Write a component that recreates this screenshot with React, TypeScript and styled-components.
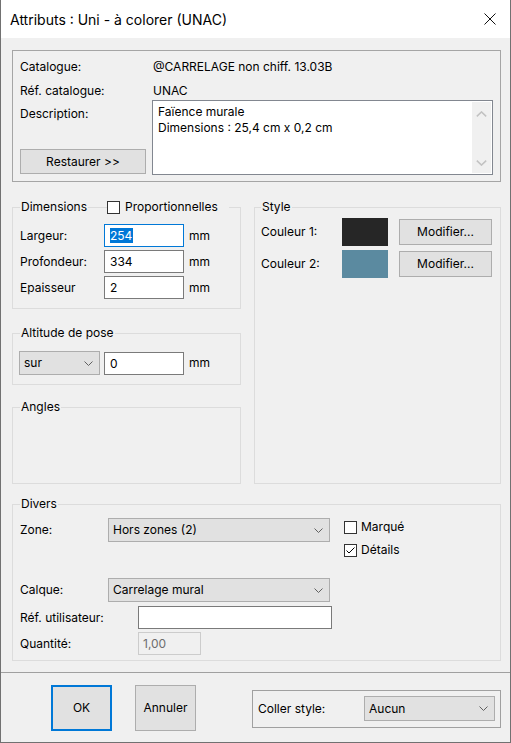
import React from "react";
import styled, { createGlobalStyle } from "styled-components";

const FONT = `Inter, "Noto Sans", "DejaVu Sans", sans-serif`;

const GlobalStyle = createGlobalStyle`
  html, body { margin: 0; padding: 0; background: #ffffff; }
  body { font-family: ${FONT}; font-size: 12px; color: #000; }
  * { box-sizing: border-box; }
`;

const Window = styled.div`
  width: 511px;
  height: 743px;
  border: 1px solid #717171;
  border-top: none;
  background: #f0f0f0;
  display: flex;
  flex-direction: column;
`;

const TitleBar = styled.div`
  height: 38px;
  flex: none;
  background: #ffffff;
  display: flex;
  align-items: center;
  justify-content: space-between;
  padding: 0 14px 0 9px;
  font-size: 14px;
  color: #000;
`;

const Body = styled.div`
  flex: 1;
  display: flex;
  flex-direction: column;
  padding: 12px 9px 0 11px;
`;

const InfoGroup = styled.div`
  border: 1px solid #a5a5a5;
  padding: 8px 7px 6px 7px;
  display: grid;
  grid-template-columns: 132px 341px;
  grid-template-rows: 24px 17px 75px;
  line-height: 16px;
`;

const Label = styled.div`
  line-height: 16px;
  white-space: nowrap;
`;

const Value = styled.div`
  line-height: 16px;
  padding-left: 1px;
  white-space: nowrap;
`;

const DescCell = styled.div`
  display: flex;
  flex-direction: column;
  justify-content: space-between;
  padding: 6px 0 1px 0;
`;

const PushButton = styled.div<{ $w: number; $h: number; $default?: boolean }>`
  width: ${(p) => p.$w}px;
  height: ${(p) => p.$h}px;
  flex: none;
  background: #e1e1e1;
  border: ${(p) => (p.$default ? "2px solid #0078d7" : "1px solid #adadad")};
  display: flex;
  align-items: center;
  justify-content: center;
  line-height: 16px;
  white-space: nowrap;
`;

const TextArea = styled.div`
  background: #fff;
  border: 1px solid #828790;
  display: flex;
`;

const TextAreaText = styled.div`
  flex: 1;
  padding: 3px 0 0 5px;
  line-height: 16px;
`;

const ScrollBar = styled.div`
  width: 19px;
  margin: 1px;
  background: #f0f0f0;
  display: flex;
  flex-direction: column;
  justify-content: space-between;
  align-items: center;
  padding: 9px 0 7px;
`;

const Middle = styled.div`
  margin-top: 17px;
  display: grid;
  grid-template-columns: 229px 247px;
  column-gap: 13px;
`;

const LeftStack = styled.div`
  display: flex;
  flex-direction: column;
`;

const Group = styled.fieldset<{ $pad: string; $mt?: number; $h?: number }>`
  margin: ${(p) => p.$mt ?? 0}px 0 0 0;
  min-width: 0;
  border: 1px solid #dcdcdc;
  padding: ${(p) => p.$pad};
  ${(p) => (p.$h ? `height: ${p.$h}px;` : "")}
`;

const Legend = styled.legend<{ $ml?: number }>`
  padding: 0 1px;
  margin-left: ${(p) => p.$ml ?? 0}px;
  line-height: 16px;
  font-size: 12px;
`;

const LegendFlex = styled.legend`
  padding: 0 11px 0 1px;
  line-height: 16px;
  font-size: 12px;
  display: flex;
  align-items: center;
`;

const LegendRule = styled.span`
  width: 19px;
  height: 1px;
  background: #dcdcdc;
  margin: 1px 0 0 1px;
`;

const LegendCheckText = styled.span`
  margin-left: 5px;
`;

const DimGrid = styled.div`
  display: grid;
  grid-template-columns: 84px 80px auto;
  grid-auto-rows: 23px;
  row-gap: 3px;
  align-items: center;
`;

const Unit = styled.span`
  padding-left: 5px;
  line-height: 16px;
  align-self: center;
`;

const TextBox = styled.div<{ $w: number; $h?: number; $disabled?: boolean; $focus?: boolean; $ml?: number; $mt?: number }>`
  width: ${(p) => p.$w}px;
  height: ${(p) => p.$h ?? 23}px;
  flex: none;
  margin-left: ${(p) => p.$ml ?? 0}px;
  margin-top: ${(p) => p.$mt ?? 0}px;
  background: ${(p) => (p.$disabled ? "#f0f0f0" : "#ffffff")};
  border: 1px solid ${(p) => (p.$disabled ? "#cccccc" : p.$focus ? "#0078d7" : "#7a7a7a")};
  color: ${(p) => (p.$disabled ? "#6d6d6d" : "#000")};
  display: flex;
  align-items: center;
  padding-left: ${(p) => (p.$disabled ? 4 : 5)}px;
  line-height: 16px;
`;

const Selected = styled.span`
  background: #0078d7;
  color: #fff;
  line-height: 15px;
  padding-right: 1px;
`;

const StyleGrid = styled.div`
  display: grid;
  grid-template-columns: 70px 46px 93px;
  column-gap: 11px;
  grid-auto-rows: 28px;
  row-gap: 4px;
  align-items: center;
`;

const Swatch = styled.div<{ $c: string }>`
  width: 46px;
  height: 28px;
  background: ${(p) => p.$c};
`;

const InlineRow = styled.div`
  display: flex;
  align-items: flex-start;
`;

const Select = styled.div<{ $w: number; $h?: number }>`
  width: ${(p) => p.$w}px;
  height: ${(p) => p.$h ?? 24}px;
  flex: none;
  background: #e1e1e1;
  border: 1px solid #adadad;
  display: flex;
  align-items: center;
  justify-content: space-between;
  padding: 0 6px 0 4px;
  line-height: 16px;
  white-space: nowrap;
`;

const DiversBody = styled.div`
  display: grid;
  grid-template-columns: 312px auto;
  column-gap: 12px;
`;

const DiversLeft = styled.div`
  display: flex;
  flex-direction: column;
`;

const FormRow = styled.div<{ $lw: number; $mt?: number }>`
  display: grid;
  grid-template-columns: ${(p) => p.$lw}px auto;
  align-items: center;
  margin-top: ${(p) => p.$mt ?? 0}px;
`;

const CheckColumn = styled.div`
  display: flex;
  flex-direction: column;
  row-gap: 7px;
  padding-top: 1px;
`;

const CheckRow = styled.label`
  display: flex;
  align-items: center;
  column-gap: 4px;
  line-height: 16px;
  white-space: nowrap;
`;

const Box = styled.span`
  width: 13px;
  height: 13px;
  flex: none;
  background: #fff;
  border: 1px solid #333;
  display: flex;
  align-items: center;
  justify-content: center;
`;

const Footer = styled.div`
  height: 70px;
  flex: none;
  border-top: 1px solid #a0a0a0;
  display: flex;
  align-items: center;
  padding-left: 50px;
`;

const CancelButton = styled(PushButton)`
  margin-left: 23px;
`;

const ColleBox = styled.div`
  margin-left: 56px;
  width: 249px;
  height: 38px;
  border: 1px solid #a0a0a0;
  display: flex;
  align-items: center;
  justify-content: space-between;
  padding: 0 5px;
  margin-top: 2px;
`;

const Chevron = ({ up, color = "#606060" }: { up?: boolean; color?: string }) => (
  <svg width="9" height="5" viewBox="0 0 9 5">
    <path
      d={up ? "M0.5 4.5 L4.5 0.5 L8.5 4.5" : "M0.5 0.5 L4.5 4.5 L8.5 0.5"}
      fill="none"
      stroke={color}
      strokeWidth="1"
    />
  </svg>
);

const ScrollArrow = ({ up }: { up?: boolean }) => (
  <svg width="11" height="6" viewBox="0 0 11 6">
    <path
      d={up ? "M0.8 5.4 L5.5 0.9 L10.2 5.4" : "M0.8 0.6 L5.5 5.1 L10.2 0.6"}
      fill="none"
      stroke="#c2c2c2"
      strokeWidth="1.5"
    />
  </svg>
);

const CloseIcon = () => (
  <svg width="12" height="12" viewBox="0 0 12 12">
    <path d="M0.5 0.5 L11.5 11.5 M11.5 0.5 L0.5 11.5" stroke="#111" strokeWidth="1" fill="none" />
  </svg>
);

const CheckBox = ({ checked }: { checked?: boolean }) => (
  <Box>
    {checked && (
      <svg width="11" height="11" viewBox="0 0 11 11">
        <path d="M1.5 5.5 L4 8 L9.5 2.5" fill="none" stroke="#000" strokeWidth="1" />
      </svg>
    )}
  </Box>
);

export default function App() {
  return (
    <>
      <GlobalStyle />
      <Window>
        <TitleBar>
          <span>Attributs : Uni - à colorer (UNAC)</span>
          <CloseIcon />
        </TitleBar>
        <Body>
          <InfoGroup>
            <Label>Catalogue:</Label>
            <Value>@CARRELAGE non chiff. 13.03B</Value>
            <Label>Réf. catalogue:</Label>
            <Value>UNAC</Value>
            <DescCell>
              <Label>Description:</Label>
              <PushButton $w={126} $h={25}>Restaurer &gt;&gt;</PushButton>
            </DescCell>
            <TextArea>
              <TextAreaText>
                Faïence murale
                <br />
                Dimensions : 25,4 cm x 0,2 cm
              </TextAreaText>
              <ScrollBar>
                <ScrollArrow up />
                <ScrollArrow />
              </ScrollBar>
            </TextArea>
          </InfoGroup>

          <Middle>
            <LeftStack>
              <Group $pad="9px 7px 9px 7px">
                <LegendFlex>
                  Dimensions
                  <LegendRule />
                  <CheckBox />
                  <LegendCheckText>Proportionnelles</LegendCheckText>
                </LegendFlex>
                <DimGrid>
                  <Label>Largeur:</Label>
                  <TextBox $w={80} $focus>
                    <Selected>254</Selected>
                  </TextBox>
                  <Unit>mm</Unit>
                  <Label>Profondeur:</Label>
                  <TextBox $w={80}>334</TextBox>
                  <Unit>mm</Unit>
                  <Label>Epaisseur</Label>
                  <TextBox $w={80}>2</TextBox>
                  <Unit>mm</Unit>
                </DimGrid>
              </Group>

              <Group $pad="10px 7px 9px 6px" $mt={16}>
                <Legend $ml={1}>Altitude de pose</Legend>
                <InlineRow>
                  <Select $w={81}>
                    <span>sur</span>
                    <Chevron />
                  </Select>
                  <TextBox $w={80} $ml={4} $mt={1}>
                    0
                  </TextBox>
                  <Unit>mm</Unit>
                </InlineRow>
              </Group>

              <Group $pad="0 7px" $mt={14} $h={85}>
                <Legend>Angles</Legend>
              </Group>
            </LeftStack>

            <Group $pad="3px 7px 0 6px">
              <Legend>Style</Legend>
              <StyleGrid>
                <Label>Couleur 1:</Label>
                <Swatch $c="#262626" />
                <PushButton $w={93} $h={26}>Modifier...</PushButton>
                <Label>Couleur 2:</Label>
                <Swatch $c="#5b8aa0" />
                <PushButton $w={93} $h={26}>Modifier...</PushButton>
              </StyleGrid>
            </Group>
          </Middle>

          <Group $pad="6px 7px 5px 7px" $mt={12}>
            <Legend>Divers</Legend>
            <DiversBody>
              <DiversLeft>
                <FormRow $lw={88}>
                  <Label>Zone:</Label>
                  <Select $w={222}>
                    <span>Hors zones (2)</span>
                    <Chevron />
                  </Select>
                </FormRow>
                <FormRow $lw={88} $mt={36}>
                  <Label>Calque:</Label>
                  <Select $w={222}>
                    <span>Carrelage mural</span>
                    <Chevron />
                  </Select>
                </FormRow>
                <FormRow $lw={118} $mt={4}>
                  <Label>Réf. utilisateur:</Label>
                  <TextBox $w={194} />
                </FormRow>
                <FormRow $lw={118} $mt={3}>
                  <Label>Quantité:</Label>
                  <TextBox $w={63} $disabled>
                    1,00
                  </TextBox>
                </FormRow>
              </DiversLeft>
              <CheckColumn>
                <CheckRow>
                  <CheckBox />
                  Marqué
                </CheckRow>
                <CheckRow>
                  <CheckBox checked />
                  Détails
                </CheckRow>
              </CheckColumn>
            </DiversBody>
          </Group>
        </Body>

        <Footer>
          <PushButton $w={61} $h={46} $default>
            OK
          </PushButton>
          <CancelButton $w={61} $h={46}>
            Annuler
          </CancelButton>
          <ColleBox>
            <Label>Coller style:</Label>
            <Select $w={131} $h={25}>
              <span>Aucun</span>
              <Chevron />
            </Select>
          </ColleBox>
        </Footer>
      </Window>
    </>
  );
}
